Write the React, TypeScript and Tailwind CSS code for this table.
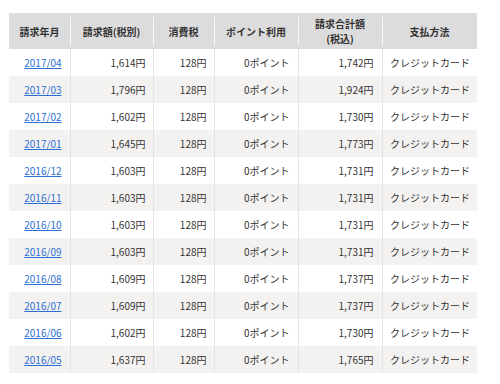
const ROWS = [
  ['2017/04', '1,614円', '1,742円'],
  ['2017/03', '1,796円', '1,924円'],
  ['2017/02', '1,602円', '1,730円'],
  ['2017/01', '1,645円', '1,773円'],
  ['2016/12', '1,603円', '1,731円'],
  ['2016/11', '1,603円', '1,731円'],
  ['2016/10', '1,603円', '1,731円'],
  ['2016/09', '1,603円', '1,731円'],
  ['2016/08', '1,609円', '1,737円'],
  ['2016/07', '1,609円', '1,737円'],
  ['2016/06', '1,602円', '1,730円'],
  ['2016/05', '1,637円', '1,765円'],
];

const WIDTHS = ['w-[61px]', 'w-[83px]', 'w-[61px]', 'w-[84px]', 'w-[84px]', 'w-[95px]'];

function HeadCell({ children, first }: { children: React.ReactNode; first?: boolean }) {
  return (
    <th className="relative h-[36px] p-0 font-bold text-center align-middle leading-[15px]">
      {!first && <span className="absolute left-0 top-[4px] bottom-[4px] w-px bg-white/80" />}
      {children}
    </th>
  );
}

export default function App() {
  return (
    <div className="w-[500px] h-[384px] bg-white pt-[13px] pl-[9px]">
      <table
        className="table-fixed border-collapse text-[10px] text-[#333]"
        style={{ fontFamily: '"Noto Sans CJK JP", "Noto Sans", sans-serif' }}
      >
        <colgroup>
          {WIDTHS.map((w, i) => (
            <col key={i} className={w} />
          ))}
        </colgroup>
        <thead>
          <tr className="bg-[#dcdcdc] text-[#333]">
            <HeadCell first>請求年月</HeadCell>
            <HeadCell>請求額(税別)</HeadCell>
            <HeadCell>消費税</HeadCell>
            <HeadCell>ポイント利用</HeadCell>
            <HeadCell>
              請求合計額
              <br />
              (税込)
            </HeadCell>
            <HeadCell>支払方法</HeadCell>
          </tr>
        </thead>
        <tbody>
          {ROWS.map(([month, amount, total], i) => (
            <tr key={month} className={i % 2 === 1 ? 'bg-[#f4f2f0]' : 'bg-white'}>
              <td className="h-[27px] p-0 pr-[8px] text-right">
                <a href="#" className="text-[#2b6fd4] underline">
                  {month}
                </a>
              </td>
              <td className="h-[27px] p-0 pr-[7px] text-right border-l border-[#e4e4e4]">{amount}</td>
              <td className="h-[27px] p-0 pr-[7px] text-right border-l border-[#e4e4e4]">128円</td>
              <td className="h-[27px] p-0 pr-[8px] text-right border-l border-[#e4e4e4]">0ポイント</td>
              <td className="h-[27px] p-0 pr-[8px] text-right border-l border-[#e4e4e4]">{total}</td>
              <td className="h-[27px] p-0 pr-[7px] text-right border-l border-[#e4e4e4]">クレジットカード</td>
            </tr>
          ))}
        </tbody>
      </table>
    </div>
  );
}
